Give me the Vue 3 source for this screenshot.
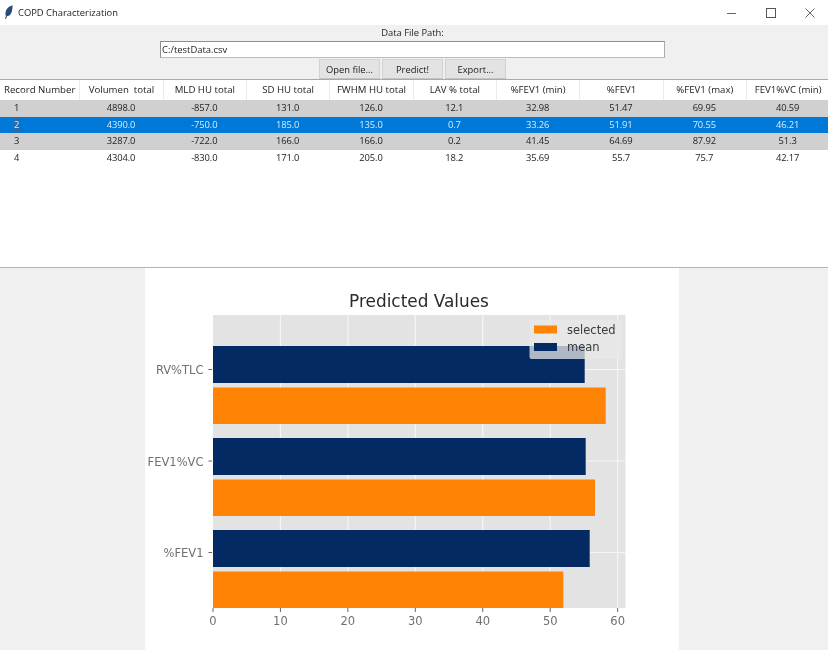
<script setup>
const columns = ['Record Number', 'Volumen  total', 'MLD HU total', 'SD HU total', 'FWHM HU total', 'LAV % total', '%FEV1 (min)', '%FEV1', '%FEV1 (max)', 'FEV1%VC (min)']
const rows = [
  { id: 1, cells: ['4898.0', '-857.0', '131.0', '126.0', '12.1', '32.98', '51.47', '69.95', '40.59'], tone: 'odd' },
  { id: 2, cells: ['4390.0', '-750.0', '185.0', '135.0', '0.7', '33.26', '51.91', '70.55', '46.21'], tone: 'selected' },
  { id: 3, cells: ['3287.0', '-722.0', '166.0', '166.0', '0.2', '41.45', '64.69', '87.92', '51.3'], tone: 'odd' },
  { id: 4, cells: ['4304.0', '-830.0', '171.0', '205.0', '18.2', '35.69', '55.7', '75.7', '42.17'], tone: 'even' }
]
const originX = 68
const pxPerUnit = 6.744
const xTicks = [0, 10, 20, 30, 40, 50, 60]
const tickX = (value) => originX + value * pxPerUnit
const groups = [
  { label: 'RV%TLC', tick: 101.5, mean: { y: 78, w: 371.7 }, selected: { y: 119.5, w: 392.7 } },
  { label: 'FEV1%VC', tick: 193, mean: { y: 170, w: 372.7 }, selected: { y: 211.5, w: 382 } },
  { label: '%FEV1', tick: 284.5, mean: { y: 262, w: 376.7 }, selected: { y: 303.5, w: 350.3 } }
]
</script>

<template>
  <div class="window">
    <header class="titlebar">
      <div class="title-left">
        <svg class="feather" width="10" height="14" viewBox="0 0 10 14">
          <path d="M8.6 .2C5 1 2.2 3.8 1.6 7.2 1.3 8.8 1.5 10 2 10.9L1 13.6 2 13.9 3 11.3C5.6 11.2 7.2 9.2 7.8 6.6 8.3 4.6 8.6 2.4 8.6 .2Z" fill="#2a4a78"/>
        </svg>
        <span class="title-text">COPD Characterization</span>
      </div>
      <div class="controls">
        <span class="control"><svg width="10" height="10" viewBox="0 0 10 10"><path d="M0 5.5h9" stroke="#666" fill="none"/></svg></span>
        <span class="control"><svg width="10" height="10" viewBox="0 0 10 10"><rect x=".5" y=".5" width="9" height="9" stroke="#555" fill="none"/></svg></span>
        <span class="control"><svg width="10" height="10" viewBox="0 0 10 10"><path d="M.5 .5l9 9M9.5 .5l-9 9" stroke="#555" stroke-width=".9" fill="none"/></svg></span>
      </div>
    </header>

    <section class="toolbar">
      <label class="path-label">Data File Path:</label>
      <input class="path-input" value="C:/testData.csv" readonly />
      <div class="buttons">
        <button class="btn">Open file...</button>
        <button class="btn">Predict!</button>
        <button class="btn">Export...</button>
      </div>
    </section>

    <section class="table">
      <div class="row head">
        <div v-for="c in columns" :key="c" class="cell head-cell">{{ c }}</div>
      </div>
      <div v-for="r in rows" :key="r.id" class="row data" :class="r.tone">
        <div class="cell id-cell"><span class="id-value">{{ r.id }}</span></div>
        <div v-for="(v, i) in r.cells" :key="i" class="cell">{{ v }}</div>
      </div>
    </section>

    <section class="lower">
      <div class="card">
        <svg class="chart" width="534" height="382" viewBox="0 0 534 382">
          <text x="274" y="39" class="chart-title" text-anchor="middle">Predicted Values</text>
          <rect x="68" y="47" width="412.5" height="293" fill="#e3e3e3"/>
          <g stroke="#f6f6f6" stroke-width="1.2">
            <line v-for="t in xTicks.slice(1)" :key="t" :x1="tickX(t)" :x2="tickX(t)" y1="47" y2="340"/>
            <line v-for="g in groups" :key="g.label" x1="68" x2="480.5" :y1="g.tick" :y2="g.tick"/>
          </g>
          <g v-for="g in groups" :key="g.label + 'bars'">
            <rect x="68" :y="g.mean.y" :width="g.mean.w" height="37" fill="#042a64"/>
            <rect x="68" :y="g.selected.y" :width="g.selected.w" height="36.5" fill="#ff8304"/>
            <line x1="63.5" x2="67" :y1="g.tick" :y2="g.tick" stroke="#666"/>
            <text x="58.5" :y="g.tick + 4.5" class="axis-label" text-anchor="end">{{ g.label }}</text>
          </g>
          <g v-for="t in xTicks" :key="'x' + t">
            <line :x1="tickX(t)" :x2="tickX(t)" y1="340" y2="344" stroke="#666"/>
            <text :x="tickX(t)" y="356.5" class="axis-label" text-anchor="middle">{{ t }}</text>
          </g>
          <rect x="384.5" y="52" width="92.5" height="39" rx="2" fill="#e8e8e8" fill-opacity="0.75"/>
          <rect x="389" y="57.5" width="23" height="8" fill="#ff8304"/>
          <rect x="389" y="75" width="23" height="8" fill="#042a64"/>
          <text x="422" y="65.5" class="legend-label">selected</text>
          <text x="422" y="83" class="legend-label">mean</text>
        </svg>
      </div>
    </section>
  </div>
</template>

<style>
html, body { margin: 0; padding: 0; background: #f0f0f0; overflow: hidden; }
</style>

<style scoped>
.window {
  width: 828px;
  height: 650px;
  display: flex;
  flex-direction: column;
  overflow: hidden;
  background: #f0f0f0;
  font-family: "Open Sans", "Noto Sans", sans-serif;
  color: #222;
  filter: blur(0.3px);
}
.titlebar {
  height: 25px;
  flex: none;
  background: #fff;
  display: flex;
  align-items: center;
  justify-content: space-between;
}
.title-left { display: flex; align-items: center; padding-left: 4px; gap: 4px; }
.feather { display: block; margin-top: -1px; }
.title-text { font-size: 9.4px; color: #222; }
.controls { display: flex; margin-right: -1px; }
.control { width: 39px; height: 24px; display: flex; align-items: center; justify-content: center; }
.toolbar {
  height: 55px;
  flex: none;
  box-sizing: border-box;
  display: flex;
  flex-direction: column;
  align-items: center;
  padding-right: 3px;
  border-bottom: 1px solid #a9a9a9;
  background: #f0f0f0;
}
.path-label { height: 16px; line-height: 16px; font-size: 9.4px; color: #222; }
.path-input {
  width: 505px;
  height: 17px;
  box-sizing: border-box;
  border: 1px solid #8f8f8f;
  border-right-color: #aaa;
  border-bottom-color: #bdbdbd;
  padding: 0 1px;
  margin: 0;
  background: #fff;
  font: 9.45px "Open Sans", sans-serif;
  color: #222;
  outline: none;
  flex: none;
}
.buttons { display: flex; gap: 2px; margin-top: 1px; }
.btn {
  width: 61px;
  height: 20px;
  box-sizing: border-box;
  padding: 0;
  border: 1px solid #d2d2d2;
  border-bottom-color: #c4c4c4;
  background: #e3e3e3;
  font: 9.4px "Open Sans", sans-serif;
  color: #222;
}
.table {
  height: 188px;
  flex: none;
  box-sizing: border-box;
  background: #fff;
  border-bottom: 1px solid #b4b4b4;
  overflow: hidden;
}
.row {
  display: grid;
  grid-template-columns: 79.33px repeat(9, 83.33px);
  width: 829.3px;
}
.head { height: 20px; background: #fff; }
.data { height: 16.67px; }
.odd { background: #d0d0d0; }
.even { background: #fff; }
.selected { background: #0078d7; color: #d8ecfb; }
.cell {
  font-size: 9.4px;
  letter-spacing: -0.12px;
  line-height: 16.67px;
  text-align: center;
  white-space: pre;
  box-sizing: border-box;
}
.head-cell {
  font-size: 9.65px;
  letter-spacing: 0;
  line-height: 20px;
  color: #222;
}
.head-cell + .head-cell { border-left: 1px solid #eaeaea; }
.id-cell { text-align: left; padding-left: 14px; }
.id-value { display: inline-block; min-width: 6px; }
.selected .id-value { background: #2a6aa8; }
.lower { flex: 1; display: flex; justify-content: center; margin-left: -4px; min-height: 0; }
.card { width: 534px; background: #fff; overflow: hidden; }
.chart { display: block; font-family: "DejaVu Sans", sans-serif; }
.chart-title { font-size: 16.9px; fill: #2a2a2a; }
.axis-label { font-size: 11.5px; fill: #6f6f6f; }
.legend-label { font-size: 11.5px; fill: #3a3a3a; }
</style>
